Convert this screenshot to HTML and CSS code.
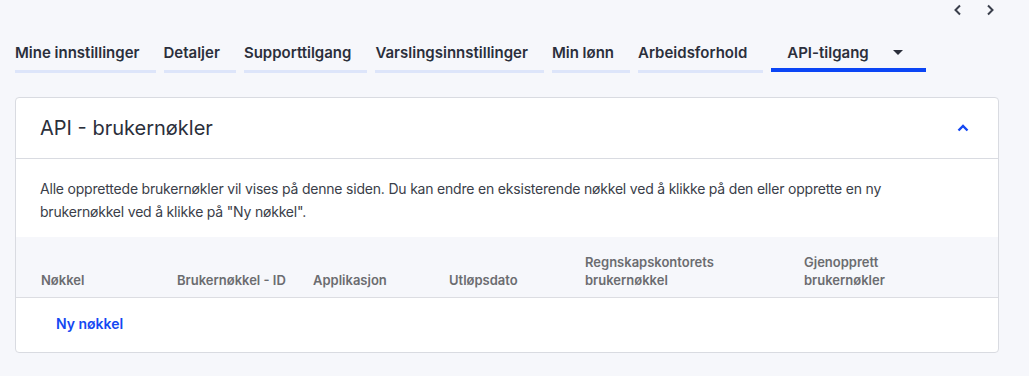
FILE: index.html
```html
<!DOCTYPE html>
<html>
<head>
    <title>API-tilgang</title>
    <link rel="stylesheet" href="styles.css">
</head>
<body>
    <div class="pager">
        <button class="pager-btn" aria-label="Forrige">
            <svg width="10" height="12" viewBox="0 0 10 12"><path d="M7 1.5 L2.5 6 L7 10.5" fill="none" stroke="#3a3f4b" stroke-width="2"/></svg>
        </button>
        <button class="pager-btn" aria-label="Neste">
            <svg width="10" height="12" viewBox="0 0 10 12"><path d="M3 1.5 L7.5 6 L3 10.5" fill="none" stroke="#3a3f4b" stroke-width="2"/></svg>
        </button>
    </div>

    <nav class="tabs">
        <a class="tab">Mine innstillinger</a>
        <a class="tab">Detaljer</a>
        <a class="tab">Supporttilgang</a>
        <a class="tab">Varslingsinnstillinger</a>
        <a class="tab">Min lønn</a>
        <a class="tab">Arbeidsforhold</a>
        <a class="tab active">API-tilgang
            <svg class="caret" width="10" height="6" viewBox="0 0 10 6"><path d="M0 0 H10 L5 5 Z" fill="#2b2f3b"/></svg>
        </a>
    </nav>

    <section class="card">
        <div class="card-header">
            <h2>API - brukernøkler</h2>
            <svg class="toggle" width="12" height="8" viewBox="0 0 12 8"><path d="M1.5 6.5 L6 2 L10.5 6.5" fill="none" stroke="#1447f2" stroke-width="2.4"/></svg>
        </div>
        <p class="intro">Alle opprettede brukernøkler vil vises på denne siden. Du kan endre en eksisterende nøkkel ved å klikke på den eller opprette en ny<br>brukernøkkel ved å klikke på "Ny nøkkel".</p>

        <table class="keys">
            <thead>
                <tr>
                    <th class="c1">Nøkkel</th>
                    <th class="c2">Brukernøkkel - ID</th>
                    <th class="c3">Applikasjon</th>
                    <th class="c4">Utløpsdato</th>
                    <th class="c5">Regnskapskontorets<br>brukernøkkel</th>
                    <th class="c6">Gjenopprett<br>brukernøkler</th>
                </tr>
            </thead>
            <tbody>
                <tr>
                    <td colspan="6"><a class="new-key">Ny nøkkel</a></td>
                </tr>
            </tbody>
        </table>
    </section>
</body>
</html>
```

FILE: styles.css
```css
body {
    margin: 0;
    background-color: #f6f7fb;
    font-family: Inter, "Noto Sans", sans-serif;
    color: #2b2f3b;
}

.pager {
    display: flex;
    justify-content: flex-end;
    gap: 14px;
    padding: 3px 30px 0 0;
    height: 17px;
}

.pager-btn {
    border: none;
    background: none;
    padding: 0;
    width: 18px;
    height: 14px;
    display: flex;
    align-items: center;
    justify-content: center;
}

.tabs {
    display: flex;
    align-items: flex-start;
    gap: 8px;
    padding: 23px 0 0 15px;
}

.tab {
    display: flex;
    align-items: center;
    font-size: 15px;
    font-weight: 600;
    line-height: 20px;
    padding: 0 16px 7px 0;
    border-bottom: 3px solid #dde5fa;
    cursor: pointer;
}

.tab.active {
    padding: 0 23px 5px 16px;
    border-bottom: 4px solid #0b45f5;
}

.caret {
    margin-left: 24px;
}

.card {
    margin: 24px 30px 0 15px;
    background: #fff;
    border: 1px solid #d9dbe1;
    border-radius: 4px;
    overflow: hidden;
}

.card-header {
    display: flex;
    align-items: center;
    justify-content: space-between;
    height: 60px;
    padding: 0 29px 0 24px;
    border-bottom: 1px solid #d9dbe1;
}

.card-header h2 {
    margin: 0;
    font-size: 20px;
    font-weight: 400;
    color: #2b2f3b;
}

.intro {
    margin: 0;
    padding: 18px 24px 14px;
    font-size: 14px;
    letter-spacing: -0.2px;
    line-height: 23px;
    color: #3a3e49;
}

.keys {
    width: 100%;
    border-collapse: collapse;
}

.keys th {
    background: #f6f7fb;
    height: 60px;
    padding: 0 0 8px 25px;
    vertical-align: bottom;
    text-align: left;
    font-size: 13px;
    font-weight: 600;
    line-height: 18px;
    color: #6b6c70;
    border-bottom: 1px solid #dcdde2;
    box-sizing: border-box;
}

.c1, .c2, .c3, .c4 { width: 136px; }
.c5 { width: 219px; }

.keys td {
    height: 55px;
    padding: 0 0 4px 40px;
    box-sizing: border-box;
}

.new-key {
    font-size: 14px;
    font-weight: 600;
    color: #1447f2;
    cursor: pointer;
}
```
